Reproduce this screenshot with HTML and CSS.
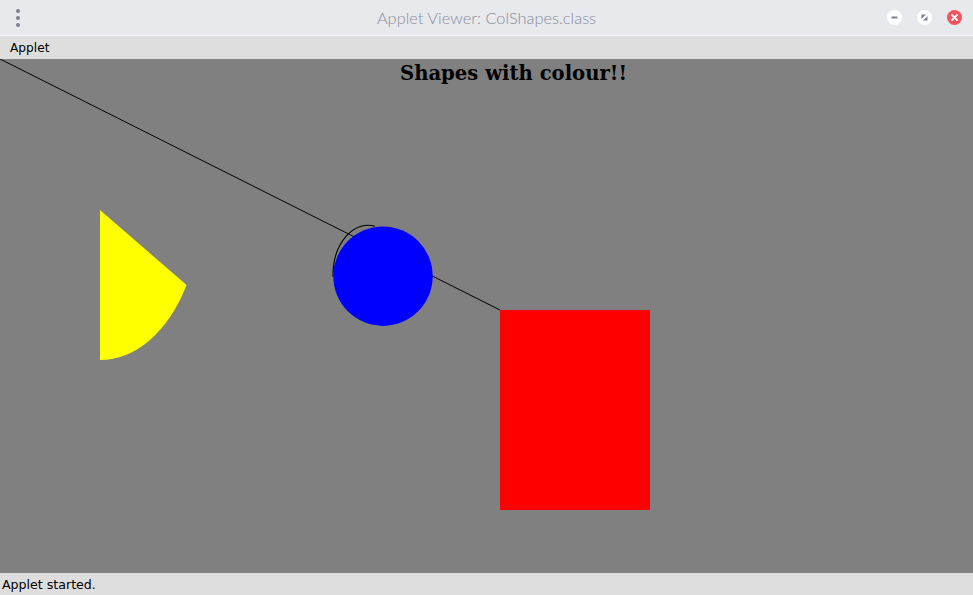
FILE: index.html
```html
<!DOCTYPE html>
<html>
<head>
<meta charset="utf-8">
<link rel="stylesheet" href="styles.css">
</head>
<body>
<div class="window">
  <div class="titlebar">
    <div class="menu-dots"><span></span><span></span><span></span></div>
    <div class="title">Applet Viewer: ColShapes.class</div>
    <div class="controls">
      <span class="btn btn-min"><svg width="15" height="15" viewBox="0 0 15 15"><rect x="4.5" y="6.5" width="6" height="2" fill="#7d8290"/></svg></span>
      <span class="btn btn-max"><svg width="15" height="15" viewBox="0 0 15 15"><path d="M4.5 4.5 L9 4.5 L4.5 9 Z M10.5 10.5 L6 10.5 L10.5 6 Z" fill="#7d8290"/></svg></span>
      <span class="btn btn-close"><svg width="15" height="15" viewBox="0 0 15 15"><path d="M5 5 L10 10 M10 5 L5 10" stroke="#fff" stroke-width="1.8" stroke-linecap="round"/></svg></span>
    </div>
  </div>
  <div class="menubar"><span class="menu-item">Applet</span></div>
  <div class="canvas">
    <svg class="drawing" width="973" height="514" viewBox="0 0 973 514">
      <line x1="0" y1="0" x2="500" y2="251" stroke="#000" stroke-width="1"/>
      <path d="M100 151 L186.6 226 A100 150 0 0 1 100 301 Z" fill="#ffff00"/>
      <path d="M375 167.3 A35 50 0 0 0 333 216.5 L333 218" fill="none" stroke="#000" stroke-width="1.1"/>
      <circle cx="383" cy="217.2" r="49.7" fill="#0000ff"/>
      <rect x="500" y="251" width="150" height="200" fill="#ff0000"/>
      <text x="400" y="21" class="heading" textLength="227" lengthAdjust="spacingAndGlyphs">Shapes with colour!!</text>
    </svg>
  </div>
  <div class="statusbar">Applet started.</div>
</div>
</body>
</html>
```
FILE: styles.css
```css
html, body {
  margin: 0;
  padding: 0;
  width: 973px;
  height: 595px;
  overflow: hidden;
}
.window {
  display: flex;
  flex-direction: column;
  width: 973px;
  height: 595px;
}
.titlebar {
  height: 35px;
  background: #e8e9ec;
  border-bottom: 1px solid #f6f6f7;
  display: flex;
  align-items: center;
  position: relative;
}
.menu-dots {
  width: 36px;
  display: flex;
  flex-direction: column;
  align-items: center;
  gap: 3px;
}
.menu-dots span {
  width: 4px;
  height: 4px;
  border-radius: 50%;
  background: #7b8190;
}
.title {
  flex: 1;
  text-align: center;
  font-family: "Lato", "DejaVu Sans", sans-serif;
  font-weight: 300;
  font-size: 16.4px;
  color: #868e9c;
  padding-right: 36px;
}
.controls {
  position: absolute;
  right: 11px;
  top: 10px;
  display: flex;
  gap: 15px;
}
.btn {
  width: 15px;
  height: 15px;
  border-radius: 50%;
  background: #ffffff;
  display: flex;
}
.btn-close {
  background: #f0545c;
}
.menubar {
  height: 23px;
  background: #dedede;
  display: flex;
  align-items: center;
}
.menu-item {
  font-family: "DejaVu Sans", sans-serif;
  font-size: 12.2px;
  color: #000;
  padding-left: 10px;
}
.canvas {
  height: 514px;
  background: #808080;
}
.drawing {
  display: block;
}
.heading {
  font-family: "DejaVu Serif", serif;
  font-weight: bold;
  font-size: 20px;
  fill: #000;
}
.statusbar {
  height: 22px;
  background: #dedede;
  font-family: "DejaVu Sans", sans-serif;
  font-size: 12.6px;
  color: #000;
  padding-left: 2px;
  display: flex;
  align-items: center;
}
```
